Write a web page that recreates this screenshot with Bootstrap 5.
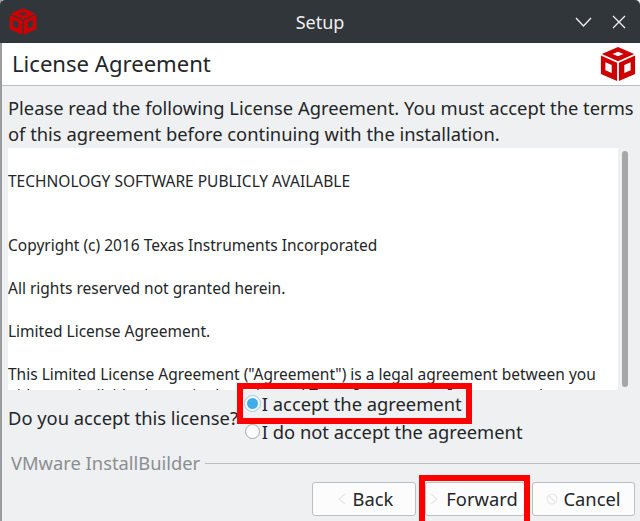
<!DOCTYPE html>
<html lang="en">
<head>
<meta charset="utf-8">
<title>Setup</title>
<link rel="stylesheet" href="https://cdn.jsdelivr.net/npm/bootstrap@5.3.0/dist/css/bootstrap.min.css">
<style>
html,body{width:640px;height:521px;overflow:hidden;margin:0}
body{font-family:"Noto Sans",sans-serif;color:#232629;background:#eff0f1;position:relative}
.win{width:640px;height:521px;display:flex;flex-direction:column;border-left:2px solid #9a9c9e}
.tbar{height:43px;background:#31363b;color:#eff0f1;font-size:18px;margin-left:-2px;border-radius:5px 5px 0 0;padding:0 14px 0 9px;flex:none}
.tbar-title{left:0;right:0;text-align:center;position:absolute;top:9px;line-height:26px}
.hdr{height:43px;background:#fff;border-bottom:1px solid #bcbebf;padding:0 4px 0 10px;flex:none}
.hdr-title{font-size:22.1px;line-height:42px;margin-top:-2px}
.intro{font-size:18.33px;line-height:26px;padding:9px 0 0 6px;margin:0;white-space:nowrap;flex:none}
.licbox{margin:1px 0 0 6px;height:242px;position:relative;flex:none;width:630px}
.lictext{width:610px;height:242px;background:#fff;overflow:hidden;font-size:15.5px;line-height:21.5px;padding:22.5px 0 0 0;color:#232629}
.lictext p{margin:0 0 21.5px;white-space:nowrap}
.lictext p.gap{margin-bottom:42.5px}
.sbar{position:absolute;left:614px;top:3px;width:6px;height:236px;background:#a5a7a9;border-radius:3px}
.accept{height:55px;padding-left:6px;flex:none;font-size:18.33px}
.q{white-space:nowrap}
.opts{margin-left:7px}
.opt{display:flex;align-items:center;white-space:nowrap;height:28px;line-height:26px}
.rad{width:15px;height:15px;border-radius:50%;border:1px solid #a6a8aa;background:#fcfcfc;margin-right:2px;flex:none}
.rad.on{background:#3daee9;border:2px solid #fcfcfc;outline:1px solid #93cee9}
.brand{height:22px;padding:0 0 0 9px;color:#8b8e90;font-size:18.33px;flex:none;margin-top:7px}
.brand hr{flex:1;margin:0 0 0 5px;border:0;border-top:1px solid #bcbebf;opacity:1}
.acts{padding:8px 5px 0 0;font-size:18.33px}
.actbtn{height:34px;background:#fcfcfc;border:1px solid #bcbebf;border-radius:3px;color:#232629;font-size:18.33px;padding:0;display:flex;align-items:center;justify-content:center;line-height:1}
.b1{width:104px;margin-right:9px}.b2{width:100px;margin-right:7px}.b3{width:103px}
.b1 svg{margin-right:7px;margin-left:3px}.b2 svg{margin-right:8px;margin-left:-2px}.b3 svg{margin-right:5px;margin-left:0}
.hl{position:absolute;border:6px solid #fe0000;pointer-events:none}
.hl1{left:237px;top:383px;width:235px;height:41px}
.hl2{left:419px;top:475px;width:111px;height:46px;border-bottom:0}
</style>
</head>
<body>
<div class="win">
  <div class="tbar d-flex align-items-center justify-content-between">
    <svg width="28" height="29" viewBox="0 0 40 40"><path fill="#cc0000" fill-rule="evenodd" d="M20 1 38 9 20 17 2 9ZM20 6.500 14 9 20 11.500 26 9ZM1 10.500 19 18.500V39L1 31ZM6 18V27L13 30V21ZM21 18.500 39 10.500V31L21 39ZM27 21V30L34 27V18Z"/></svg>
    <div class="tbar-title">Setup</div>
    <div class="d-flex align-items-center" style="gap:20px">
      <svg width="17" height="10" viewBox="0 0 17 10"><path d="M1 1 8.500 9 16 1" fill="none" stroke="#eff0f1" stroke-width="1.300"/></svg>
      <svg width="14" height="14" viewBox="0 0 14 14"><path d="M1 1 13 13M13 1 1 13" fill="none" stroke="#eff0f1" stroke-width="1.300"/></svg>
    </div>
  </div>
  <div class="hdr d-flex align-items-center justify-content-between">
    <div class="hdr-title">License Agreement</div>
    <svg width="36" height="38" viewBox="0 0 40 40"><path fill="#cc0000" fill-rule="evenodd" d="M20 1 38 9 20 17 2 9ZM20 6.500 14 9 20 11.500 26 9ZM1 10.500 19 18.500V39L1 31ZM6 18V27L13 30V21ZM21 18.500 39 10.500V31L21 39ZM27 21V30L34 27V18Z"/></svg>
  </div>
  <p class="intro">Please read the following License Agreement. You must accept the terms<br>of this agreement before continuing with the installation.</p>
  <div class="licbox">
    <div class="lictext">
      <p class="gap">TECHNOLOGY SOFTWARE PUBLICLY AVAILABLE</p>
      <p>Copyright (c) 2016 Texas Instruments Incorporated</p>
      <p>All rights reserved not granted herein.</p>
      <p>Limited License Agreement.</p>
      <p class="mb-0">This Limited License Agreement ("Agreement") is a legal agreement between you</p>
      <p>either an individual or a single entity and Texas Instruments Incorporated</p>
    </div>
    <div class="sbar"></div>
  </div>
  <div class="accept d-flex align-items-center">
    <div class="q">Do you accept this license?</div>
    <div class="opts">
      <div class="opt"><span class="rad on"></span>I accept the agreement</div>
      <div class="opt"><span class="rad"></span>I do not accept the agreement</div>
    </div>
  </div>
  <div class="brand d-flex align-items-center"><span>VMware InstallBuilder</span><hr></div>
  <div class="acts d-flex justify-content-end">
    <button type="button" class="actbtn b1"><svg width="8" height="12" viewBox="0 0 8 12"><path d="M7 1 1 6 7 11" fill="none" stroke="#e6e7e8" stroke-width="1.200"/></svg>Back</button>
    <button type="button" class="actbtn b2"><svg width="8" height="12" viewBox="0 0 8 12"><path d="M1 1 7 6 1 11" fill="none" stroke="#e6e7e8" stroke-width="1.200"/></svg>Forward</button>
    <button type="button" class="actbtn b3"><svg width="12" height="12" viewBox="0 0 12 12"><circle cx="6" cy="6" r="5" fill="none" stroke="#e6e7e8" stroke-width="1.200"/><path d="M2.500 2.500 9.500 9.500" stroke="#e6e7e8" stroke-width="1.200"/></svg>Cancel</button>
  </div>
</div>
<div class="hl hl1"></div>
<div class="hl hl2"></div>
</body>
</html>
